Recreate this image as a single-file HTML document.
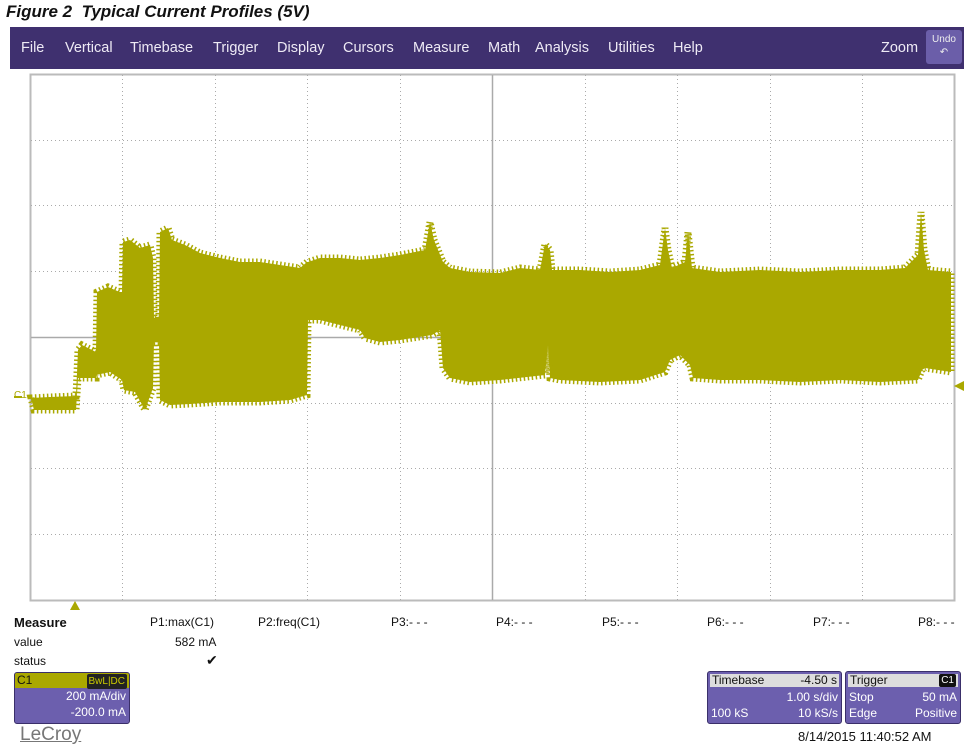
<!DOCTYPE html>
<html><head><meta charset="utf-8"><style>
body{margin:0;width:974px;height:756px;background:#fff;position:relative;overflow:hidden;font-family:"Liberation Sans",sans-serif}
.a{position:absolute;white-space:nowrap}
#title{left:6px;top:2px;font-size:17px;font-weight:bold;font-style:italic;color:#111}
#menu{left:10px;top:27px;width:954px;height:42px;background:#3f306f}
.m{position:absolute;top:13px;color:#eeeaf5;font-size:14.5px}
.t{font-size:12px;color:#111}
.box{position:absolute;background:#6c5fae;border-radius:3px;color:#fff;font-size:12px;border:1px solid #3a2f6a}
</style></head><body>
<div class="a" id="title">Figure 2&nbsp; Typical Current Profiles (5V)</div>
<div class="a" id="menu">
<span class="m" style="left:11px">File</span>
<span class="m" style="left:55px">Vertical</span>
<span class="m" style="left:120px">Timebase</span>
<span class="m" style="left:203px">Trigger</span>
<span class="m" style="left:267px">Display</span>
<span class="m" style="left:333px">Cursors</span>
<span class="m" style="left:403px">Measure</span>
<span class="m" style="left:478px">Math</span>
<span class="m" style="left:525px">Analysis</span>
<span class="m" style="left:598px">Utilities</span>
<span class="m" style="left:663px">Help</span>
<span class="m" style="left:871px">Zoom</span>
<div style="position:absolute;left:916px;top:3px;width:36px;height:34px;background:#6b5ea9;border-radius:3px;color:#eee;font-size:10px;text-align:center;line-height:13px;padding-top:3px;box-sizing:border-box">Undo<br>↶</div>
</div>
<svg class="a" style="left:0;top:0" width="974" height="620">
<rect x="30.5" y="74.5" width="924" height="526" fill="none" stroke="#bbb" stroke-width="2"/>
<g stroke="#aaa" stroke-dasharray="1,3" stroke-width="1">
<path d="M122.5 75V600M215.5 75V600M307.5 75V600M400.5 75V600M585.5 75V600M677.5 75V600M770.5 75V600M862.5 75V600"/>
<path d="M31 140.5H954M31 205.5H954M31 271.5H954M31 403.5H954M31 468.5H954M31 534.5H954"/>
</g>
<path d="M31 337.5H954M492.5 75V600" stroke="#aaa" stroke-width="1.5"/>
<path fill="#aaa800" stroke="#aaa800" stroke-width="7" stroke-dasharray="1.5,2.5" d="M31 398 L50 397 L76 396 L78 350 L82 345 L96 352 L97 292 L108 287 L115 290 L122 293 L123 242 L130 240 L140 248 L150 245 L153 258 L154 318 L159 318 L160 232 L168 228 L172 240 L185 245 L200 253 L220 258 L240 262 L260 262 L280 265 L300 268 L307 262 L308 262 L320 258 L340 258 L360 260 L380 258 L400 255 L425 250 L430 222 L434 240 L443 262 L450 268 L470 272 L500 273 L520 268 L540 270 L545 244 L550 250 L552 270 L580 270 L610 272 L640 270 L660 265 L665 228 L668 250 L672 268 L685 262 L688 232 L692 268 L720 272 L760 270 L800 272 L840 270 L880 270 L905 268 L918 255 L921 212 L924 250 L928 270 L951 272 L951 372 L925 368 L922 370 L918 380 L880 382 L840 380 L800 382 L760 380 L720 380 L693 378 L690 365 L680 355 L670 360 L665 372 L640 380 L600 382 L560 380 L550 378 L548 345 L545 375 L500 380 L470 382 L450 378 L443 368 L440 330 L432 335 L400 340 L380 342 L365 338 L360 330 L340 325 L320 320 L308 320 L307 395 L290 400 L260 402 L220 402 L190 404 L170 405 L160 400 L159 342 L154 342 L153 388 L145 410 L135 392 L124 390 L122 380 L110 372 L96 375 L96 378 L78 378 L76 410 L34 410 Z"/>
<path d="M14 397H22" stroke="#aaa800" stroke-width="2"/>
<text x="14" y="398" font-size="10" fill="#aaa800" font-family="Liberation Sans">C1</text>
<polygon points="954,386 964,381 964,391" fill="#aaa800"/>
<polygon points="70,610 75,601 80,610" fill="#aaa800"/>
</svg>
<div class="a t" style="left:14px;top:615px;font-weight:bold;font-size:13px">Measure</div>
<div class="a t" style="left:14px;top:635px">value</div>
<div class="a t" style="left:14px;top:654px">status</div>
<div class="a t" style="left:150px;top:615px">P1:max(C1)</div>
<div class="a t" style="left:175px;top:635px">582 mA</div>
<div class="a t" style="left:206px;top:652px;font-size:14px">✔</div>
<div class="a t" style="left:258px;top:615px">P2:freq(C1)</div>
<div class="a t" style="left:391px;top:615px">P3:- - -</div>
<div class="a t" style="left:496px;top:615px">P4:- - -</div>
<div class="a t" style="left:602px;top:615px">P5:- - -</div>
<div class="a t" style="left:707px;top:615px">P6:- - -</div>
<div class="a t" style="left:813px;top:615px">P7:- - -</div>
<div class="a t" style="left:918px;top:615px">P8:- - -</div>
<div class="box" style="left:14px;top:672px;width:114px;height:50px;overflow:hidden">
<div style="background:#aaa800;color:#111;height:15px;padding-left:2px;line-height:15px">C1<span style="position:absolute;right:2px;top:1px;font-size:10px;background:#222;color:#cc0;padding:0 2px;border-radius:2px">BwL|DC</span></div>
<div style="text-align:right;padding-right:3px;line-height:16px">200 mA/div<br>-200.0 mA</div></div>
<div class="a" style="left:20px;top:724px;font-size:19px;color:#777;text-decoration:underline">LeCroy</div>
<div class="box" style="left:707px;top:671px;width:133px;height:51px;overflow:hidden;font-size:12px">
<div style="background:#ddd;color:#111;margin:2px;height:13px;line-height:13px;padding:0 2px">Timebase<span style="float:right">-4.50 s</span></div>
<div style="text-align:right;padding-right:3px;line-height:17px">1.00 s/div</div>
<div style="padding:0 3px;line-height:14px">100 kS<span style="float:right">10 kS/s</span></div></div>
<div class="box" style="left:845px;top:671px;width:114px;height:51px;overflow:hidden;font-size:12px">
<div style="background:#ddd;color:#111;margin:2px;height:13px;line-height:13px;padding:0 2px">Trigger<span style="float:right;background:#111;color:#fff;font-size:10px;padding:0 2px;border-radius:2px">C1</span></div>
<div style="padding:0 3px;line-height:17px">Stop<span style="float:right">50 mA</span></div>
<div style="padding:0 3px;line-height:14px">Edge<span style="float:right">Positive</span></div></div>
<div class="a t" style="left:798px;top:729px;font-size:13px">8/14/2015 11:40:52 AM</div>
</body></html>
